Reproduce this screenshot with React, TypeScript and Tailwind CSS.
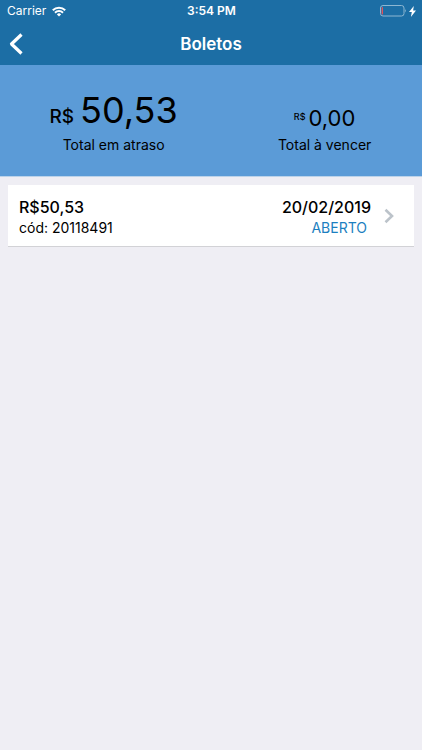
import React from "react";

type Boleto = { amount: string; code: string; due: string; status: string };

const boletos: Boleto[] = [
  { amount: "R$50,53", code: "20118491", due: "20/02/2019", status: "ABERTO" },
];

function StatusBar() {
  return (
    <div className="grid h-[22px] grid-cols-[1fr_auto_1fr] items-center pr-[6px] pl-[7px] text-[12px] leading-4">
      <div className="flex items-center gap-[6px]">
        <span>Carrier</span>
        <svg width="14" height="11" viewBox="0 0 14 11" fill="none" stroke="currentColor" strokeWidth="2" aria-hidden="true">
          <path d="M0.8 4.2a8.8 8.8 0 0 1 12.4 0" />
          <path d="M3 6.7a5.7 5.7 0 0 1 8 0" />
          <path d="M7 10.6 4.9 8.4a3 3 0 0 1 4.2 0z" fill="currentColor" stroke="none" />
        </svg>
      </div>
      <span className="font-semibold">3:54 PM</span>
      <div className="flex items-center justify-end gap-[2px]">
        <svg width="27" height="12" viewBox="0 0 27 12" aria-hidden="true">
          <rect x="0.5" y="0.5" width="23.5" height="10.5" rx="2.5" fill="none" stroke="#8db7d2" />
          <path d="M1.6 3.4Q1.6 2 3 2v7.6q-1.4 0-1.4-1.4z" fill="#e0525c" />
          <path d="M25 4q1.8 1.7 0 3.6z" fill="#8db7d2" />
        </svg>
        <svg width="7" height="11" viewBox="0 0 7 11" fill="currentColor" aria-hidden="true">
          <path d="M4.8 0 0 6.1h2.8L1.9 11 7 4.6H4.1z" />
        </svg>
      </div>
    </div>
  );
}

function Chevron() {
  return (
    <svg width="10" height="16" viewBox="0 0 10 16" fill="none" stroke="#bcc3ca" strokeWidth="2.6" className="shrink-0" aria-hidden="true">
      <path d="M1.5 1.8 8 8l-6.500 6.200" />
    </svg>
  );
}

export default function App() {
  return (
    <div className="min-h-screen bg-[#efeef4] font-['Inter','Liberation_Sans',sans-serif] text-black">
      <header className="bg-[#1c6ea5] text-white">
        <StatusBar />
        <div className="grid h-[43px] grid-cols-[1fr_auto_1fr] items-center px-2">
          <button type="button" aria-label="Voltar" className="flex h-10 w-8 items-center">
            <svg width="16" height="22" viewBox="0 0 16 22" fill="none" stroke="currentColor" strokeWidth="3.2" strokeLinejoin="round" aria-hidden="true">
              <path d="M13.500 1.500 3.500 11l10 9.500" />
            </svg>
          </button>
          <h1 className="text-[17px] leading-5 font-semibold">Boletos</h1>
        </div>
      </header>

      <section className="grid h-[112px] grid-cols-[7fr_6fr] border-b border-[#bcd3ea] bg-[#5b9bd7] pt-[25px] text-center">
        <div>
          <p className="flex h-[45px] items-baseline justify-center gap-[6px]">
            <span className="text-[19px] font-medium">R$</span>
            <span className="text-[36px] leading-10">50,53</span>
          </p>
          <p className="text-[14px] leading-5">Total em atraso</p>
        </div>
        <div>
          <p className="flex h-[45px] items-start justify-center gap-[3px] pt-[14px]">
            <span className="pt-[7px] text-[9px] leading-3 font-medium">R$</span>
            <span className="text-[22px] leading-7">0,00</span>
          </p>
          <p className="text-[14px] leading-5">Total à vencer</p>
        </div>
      </section>

      <main className="p-2">
        <ul className="flex flex-col gap-2">
          {boletos.map((b) => (
            <li key={b.code}>
              <button
                type="button"
                className="flex h-[62px] w-full items-center border-b border-[#d2d2d6] bg-white pr-5 pl-[11px] text-left"
              >
                <span className="flex flex-1 flex-col gap-px pt-[3px]">
                  <span className="text-[16px] leading-5 font-medium">{b.amount}</span>
                  <span className="text-[14px] leading-5">cód: {b.code}</span>
                </span>
                <span className="mr-[13px] flex flex-col gap-px pt-[3px] text-right">
                  <span className="text-[16px] leading-5 font-medium">{b.due}</span>
                  <span className="pr-1 text-[14px] leading-5 text-[#1c7fc0]">{b.status}</span>
                </span>
                <Chevron />
              </button>
            </li>
          ))}
        </ul>
      </main>
    </div>
  );
}
